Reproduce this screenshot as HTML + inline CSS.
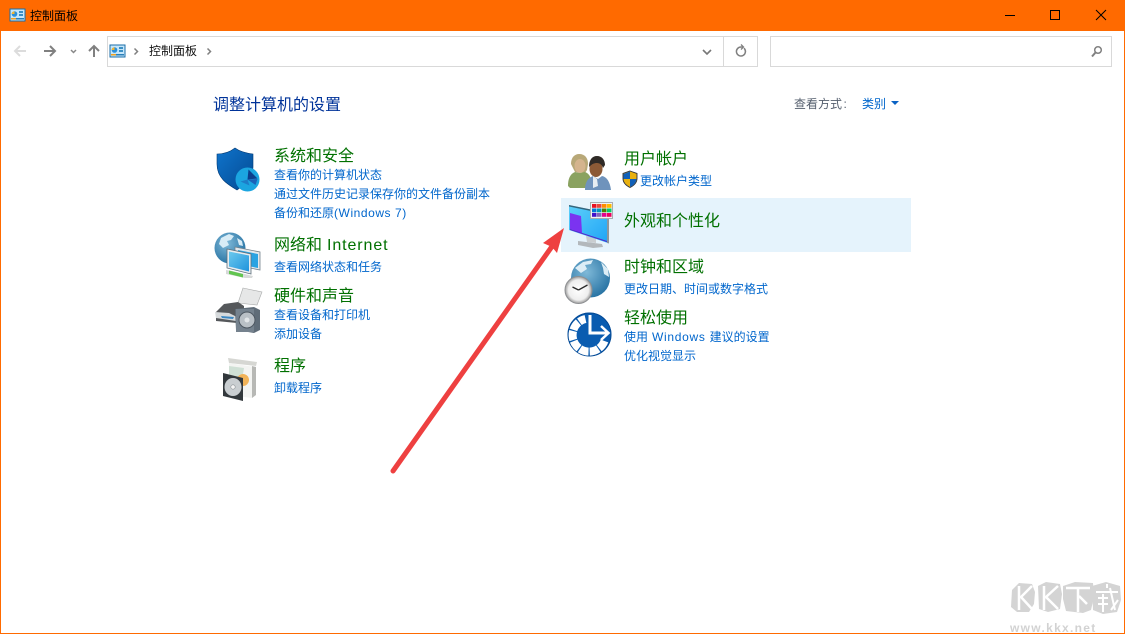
<!DOCTYPE html>
<html lang="zh-CN">
<head>
<meta charset="utf-8">
<title>控制面板</title>
<style>
html,body{margin:0;padding:0;background:#fff;}
body{width:1125px;height:634px;position:relative;overflow:hidden;font-family:"Liberation Sans","Noto Sans CJK SC",sans-serif;}
.t{position:absolute;white-space:nowrap;line-height:18px;font-size:12px;}
.h{color:#007000;font-size:16px;line-height:22px;}
.l{color:#0066cc;}
.abs{position:absolute;left:0;top:0;}
.box{position:absolute;border:1px solid #d9d9d9;box-sizing:border-box;background:#fff;}
</style>
</head>
<body>
<!-- window frame -->
<div style="position:absolute;left:0;top:0;width:1125px;height:31px;background:#ff6a00"></div>
<div style="position:absolute;left:0;top:0;width:1px;height:634px;background:#ff6a00"></div>
<div style="position:absolute;right:0;top:0;width:1px;height:634px;background:#ff6a00"></div>
<div style="position:absolute;left:0;top:633px;width:1125px;height:1px;background:#ff6a00"></div>

<!-- address bar and search -->
<div class="box" style="left:107px;top:36px;width:651px;height:31px"></div>
<div style="position:absolute;left:723px;top:36px;width:1px;height:31px;background:#d9d9d9"></div>
<div class="box" style="left:770px;top:36px;width:342px;height:31px"></div>

<!-- highlight -->
<div style="position:absolute;left:561px;top:198px;width:350px;height:54px;background:#e5f3fc"></div>

<!-- text -->
<div class="t" style="left:30px;top:7px;color:#000">控制面板</div>
<div class="t" style="left:149px;top:42px;color:#111">控制面板</div>
<div class="t" style="left:213px;top:95px;font-size:16px;line-height:22px;color:#003399">调整计算机的设置</div>
<div class="t" style="left:794px;top:95px;color:#555f6e">查看方式<span style="margin-left:1.500px">:</span></div>
<div class="t l" style="left:862px;top:95px">类别</div>

<div class="t h" style="left:274px;top:146px">系统和安全</div>
<div class="t l" style="left:274px;top:166px">查看你的计算机状态</div>
<div class="t l" style="left:274px;top:185px">通过文件历史记录保存你的文件备份副本</div>
<div class="t l" style="left:274px;top:204px">备份和还原<span style="letter-spacing:.55px">(Windows 7)</span></div>

<div class="t h" style="left:274px;top:235px">网络和<span style="margin-left:5px;letter-spacing:.9px">Internet</span></div>
<div class="t l" style="left:274px;top:258px">查看网络状态和任务</div>

<div class="t h" style="left:274px;top:286px">硬件和声音</div>
<div class="t l" style="left:274px;top:306px">查看设备和打印机</div>
<div class="t l" style="left:274px;top:325px">添加设备</div>

<div class="t h" style="left:274px;top:356px">程序</div>
<div class="t l" style="left:274px;top:379px">卸载程序</div>

<div class="t h" style="left:624px;top:149px">用户帐户</div>
<div class="t l" style="left:640px;top:172px">更改帐户类型</div>

<div class="t h" style="left:624px;top:211px">外观和个性化</div>

<div class="t h" style="left:624px;top:257px">时钟和区域</div>
<div class="t l" style="left:624px;top:280px">更改日期、时间或数字格式</div>

<div class="t h" style="left:624px;top:308px">轻松使用</div>
<div class="t l" style="left:624px;top:328px">使用<span style="margin-left:4px;letter-spacing:.7px">Windows</span><span style="margin-left:4px">建议的设置</span></div>
<div class="t l" style="left:624px;top:347px">优化视觉显示</div>

<!-- watermark text -->
<div class="t" style="left:1010px;top:621px;font-size:12px;line-height:14px;font-weight:bold;letter-spacing:1.300px;color:#d2d2d2">www.kkx.net</div>

<svg class="abs" width="1125" height="634" viewBox="0 0 1125 634" xmlns="http://www.w3.org/2000/svg">
<defs>
<linearGradient id="sh" x1="0" y1="0" x2="1" y2="1"><stop offset="0" stop-color="#0f74cc"/><stop offset="1" stop-color="#044a92"/></linearGradient>
<linearGradient id="scr" x1="0" y1="0" x2="1" y2="1"><stop offset="0" stop-color="#5ed0fa"/><stop offset="1" stop-color="#1fa4f6"/></linearGradient>
<linearGradient id="scr2" x1="0" y1="0" x2="1" y2="1"><stop offset="0" stop-color="#6cc9ee"/><stop offset="1" stop-color="#1f93dc"/></linearGradient>
<radialGradient id="gl" cx=".4" cy=".35" r=".75"><stop offset="0" stop-color="#7fb9d8"/><stop offset="1" stop-color="#1f6c9e"/></radialGradient>
<radialGradient id="ck" cx=".5" cy=".5" r=".5"><stop offset="0" stop-color="#fff"/><stop offset=".75" stop-color="#eee"/><stop offset="1" stop-color="#9a9a9a"/></radialGradient>
</defs>

<!-- title icon -->
<g>
<rect x="10" y="9" width="15" height="12" fill="#c5e6fa" stroke="#1a6ea8"/>
<circle cx="14.500" cy="14" r="2.800" fill="#2a8fd8"/><path d="M14.500 14h-2.800a2.800 2.800 0 0 1 2.800-2.800z" fill="#f5b52e"/>
<rect x="19" y="11" width="4" height="2" fill="#3b8fc4"/><rect x="19" y="14" width="4" height="2" fill="#3b8fc4"/>
<rect x="11" y="18" width="5" height="1.500" fill="#f0a020"/><rect x="16" y="18" width="8" height="1.500" fill="#2a7fb8"/>
</g>
<!-- breadcrumb icon -->
<g transform="translate(100,36)">
<rect x="10" y="9" width="15" height="12" fill="#c5e6fa" stroke="#1a6ea8"/>
<circle cx="14.500" cy="14" r="2.800" fill="#2a8fd8"/><path d="M14.500 14h-2.800a2.800 2.800 0 0 1 2.800-2.800z" fill="#f5b52e"/>
<rect x="19" y="11" width="4" height="2" fill="#3b8fc4"/><rect x="19" y="14" width="4" height="2" fill="#3b8fc4"/>
<rect x="11" y="18" width="5" height="1.500" fill="#f0a020"/><rect x="16" y="18" width="8" height="1.500" fill="#2a7fb8"/>
</g>

<!-- window buttons -->
<path d="M1005 15.500h10" stroke="#000" fill="none"/>
<rect x="1050.500" y="10.500" width="9" height="9" fill="none" stroke="#000"/>
<path d="M1096 10l10 10M1106 10l-10 10" stroke="#000" fill="none"/>

<!-- nav arrows -->
<path d="M15 51h11M20 46l-5 5 5 5" fill="none" stroke="#dcdcdc" stroke-width="2"/>
<path d="M44 51h11M50 46l5 5-5 5" fill="none" stroke="#808080" stroke-width="2"/>
<path d="M71 50l2.500 2.500 2.500-2.500" fill="none" stroke="#888" stroke-width="1.500"/>
<path d="M94 57V46M89 51l5-5 5 5" fill="none" stroke="#808080" stroke-width="2"/>
<path d="M134.500 48.500l3 3-3 3" fill="none" stroke="#808080" stroke-width="1.500"/>
<path d="M207.500 48.500l3 3-3 3" fill="none" stroke="#808080" stroke-width="1.500"/>
<path d="M703 50l4 4 4-4" fill="none" stroke="#777" stroke-width="1.600"/>
<path d="M744 48.200a4.500 4.500 0 1 1-3-1.200h2" fill="none" stroke="#808080" stroke-width="1.500"/>
<path d="M741 44.500l2.500 2.500-2.500 2.500" fill="none" stroke="#808080" stroke-width="1.300"/>
<circle cx="1098" cy="50" r="3.300" fill="none" stroke="#808080" stroke-width="1.500"/>
<path d="M1095.500 52.500l-3.500 4" stroke="#808080" stroke-width="2"/>

<!-- dropdown triangle -->
<path d="M891 101h8l-4 4z" fill="#0a62c4"/>

<!-- shield icon -->
<path d="M217 154c7 0 13-2 18-6 4 3 10 5 18 6v13c0 10-7 17-16 23-10-6-20-12-20-26z" fill="url(#sh)" stroke="#033a75" stroke-width=".6"/>
<circle cx="247.500" cy="179.500" r="12" fill="#1ba5e0"/>
<path d="M247.500 179.500l1-10 9 9z" fill="#0b3f8c"/>
<path d="M247.500 179.500l10-.5-2 6z" fill="#1b62b8"/>
<path d="M247.500 179.500l-7 2 9 4z" fill="#1d7dc8"/>

<!-- globe network icon -->
<circle cx="230" cy="248" r="15.500" fill="url(#gl)"/>
<path d="M221 238l8-4 5 2-3 4-4 1 2 4-6 3-4-4zM237 238l5 3 1 5-4-1z" fill="#d8ecf6"/>
<path d="M235 247l25 5v18l-25-5z" fill="#e4e8eb" stroke="#74828c" stroke-width=".8"/>
<path d="M238 250l20 4v14l-20-4z" fill="#2aa3e2"/>
<path d="M227 249l24 5v20l-24-6z" fill="#e8ecef" stroke="#5e6f7c" stroke-width=".8"/>
<path d="M229 251.500l20 4v16l-20-5z" fill="url(#scr2)"/>
<path d="M226 270l6 1 21 5-1 2-7 0-19-4z" fill="#d7d9d9"/>
<path d="M229 270.500l14 3.500v3.500l-14-3.500z" fill="#62c550"/>

<!-- printer speaker icon -->
<path d="M243 288l19 4-5 13-19-2z" fill="#e6e7e7" stroke="#a8aaaa" stroke-width=".6"/>
<path d="M216 312l8-8 14-2 6 4v6l-6 2-1 9-21-2z" fill="#55585b"/>
<path d="M215 312l14 1 8 4-1 4-20-3z" fill="#d6dadc"/>
<path d="M221 316l13 1-1 2-11-1z" fill="#3c88c2"/>
<path d="M235 309l19-2 6 3v20l-6 3-18-3z" fill="#5f6c78"/>
<rect x="236" y="309" width="18" height="23" fill="#75828e"/>
<circle cx="247" cy="320" r="8" fill="#b9c0c6" stroke="#4c5660"/>
<circle cx="247" cy="320" r="2.500" fill="#e2e6e9"/>

<!-- programs icon -->
<path d="M228 358l29 4-1 4-27-3z" fill="#d6d7d3"/>
<path d="M229 363l26 4v28l-3 3-23-3z" fill="#f3f4f2"/>
<path d="M252 366l4 1v28l-4 3z" fill="#b7b8b5"/>
<path d="M229 366l15 2-2 12-13-1z" fill="#cfe0d5"/>
<circle cx="243" cy="380" r="6" fill="#f1b358"/>
<path d="M223 373l20 5v23l-20-5z" fill="#32383c"/>
<ellipse cx="233" cy="387" rx="8.500" ry="9" fill="#c9ced1"/>
<circle cx="233" cy="387" r="2.200" fill="#f4f4f4" stroke="#8c9296" stroke-width=".6"/>

<!-- users icon -->
<path d="M571 164c0-7 4-10 8-10 6 0 9 4 9 10l-1 6-2 3-10-1z" fill="#b8a878"/>
<ellipse cx="580" cy="166" rx="5.500" ry="7" fill="#d4b48e"/>
<path d="M568 186c0-7 2-12 7-14l5 1 5-1c3 1 6 4 6 9v5l-3 2h-18z" fill="#8aa260"/>
<ellipse cx="596" cy="169" rx="6.500" ry="8" fill="#8c5a36"/>
<path d="M589 167c0-7 3-11 8-11 5 0 8 4 8 9l-2 3c-1-3-3-5-6-5-3 0-5 1-8 4z" fill="#2f2a26"/>
<path d="M585 190c0-8 3-12 8-14l5 3 4-3c5 1 8 6 9 14z" fill="#6f93bc"/>
<path d="M593 176l4 3 1 7-5 2z" fill="#e8eef2"/>

<!-- small UAC shield -->
<path d="M630 171l7 2.500v5c0 4-3 7-7 9-4-2-7-5-7-9v-5z" fill="#e9b10f" stroke="#30333c" stroke-width=".9"/>
<path d="M630 171.500v7.500h-6.500v-5zM630 179h6.500c-.5 4-3 6.500-6.500 8z" fill="#1160b8"/>

<!-- monitor icon -->
<path d="M578 241l24 3 1 3-10 1-15-3z" fill="#b3b8bc"/>
<path d="M586 236l10 2v5l-9-1z" fill="#c9cdd0"/>
<path d="M569 205l39 8v30l-39-13z" fill="url(#scr)"/>
<path d="M569 205l39 8v1.500l-39-8z" fill="#2a3a46" opacity=".7"/>
<path d="M570 213l11 3 1 17-12-4z" fill="#7b33f0"/>
<path d="M570 229l37 12v1l-37-12z" fill="#5a1fc8"/>
<path d="M607 213l2 .5v30l-2-.5z" fill="#8e969c"/>
<rect x="590.500" y="202.500" width="22" height="16" fill="#f2f2f2" stroke="#a7acb0"/>
<rect x="592" y="204" width="4.500" height="3.800" fill="#e81123"/><rect x="597" y="204" width="4.500" height="3.800" fill="#e8483c"/><rect x="602" y="204" width="4.500" height="3.800" fill="#ff8c00"/><rect x="607" y="204" width="4.500" height="3.800" fill="#ffb900"/>
<rect x="592" y="208.500" width="4.500" height="3.800" fill="#0078d7"/><rect x="597" y="208.500" width="4.500" height="3.800" fill="#0099bc"/><rect x="602" y="208.500" width="4.500" height="3.800" fill="#498205"/><rect x="607" y="208.500" width="4.500" height="3.800" fill="#00cc6a"/>
<rect x="592" y="213" width="4.500" height="3.800" fill="#4310c8"/><rect x="597" y="213" width="4.500" height="3.800" fill="#8764b8"/><rect x="602" y="213" width="4.500" height="3.800" fill="#e3008c"/><rect x="607" y="213" width="4.500" height="3.800" fill="#ea005e"/>

<!-- globe clock icon -->
<circle cx="590.500" cy="278" r="19.500" fill="url(#gl)"/>
<path d="M575 268l8-6 10-2-2 4-6 1 2 4-6 4zM601 262l7 7 1 8-5-3-1-6z" fill="#dcedf6"/>
<circle cx="578.500" cy="290" r="13.500" fill="url(#ck)" stroke="#8d8f92"/>
<path d="M578.500 290l-6-3M578.500 290l9-5" stroke="#2a2a2a" stroke-width="1.300" fill="none"/>

<!-- ease of access icon -->
<circle cx="589.500" cy="334.500" r="22" fill="#0a5cb0"/>
<circle cx="589.500" cy="334.500" r="21.500" fill="none" stroke="#064a94"/>
<path d="M604.500 341a16.500 16.500 0 1 1-19-22" fill="none" stroke="#fff" stroke-width="8" stroke-dasharray="9 1.200"/>
<path d="M588.500 315h3v18h-3z" fill="#fff"/>
<path d="M588.500 331.500h19v3h-19z" fill="#fff"/>
<path d="M601 326l7.500 7-7.500 7" fill="none" stroke="#fff" stroke-width="2.500"/>

<!-- red arrow -->
<path d="M393 471L553 245" stroke="#ee4040" stroke-width="5" stroke-linecap="round" fill="none"/>
<path d="M564 228L543 243l9 4 5 6z" fill="#ee4040"/>

<!-- KK watermark -->
<path d="M1012 590l7-7 13 1 3 8-1 12-5 8h-12l-6-5z" fill="#d4d4d4"/>
<path d="M1038 586l8-4 14 2 2 10-2 15-12 3-9-3z" fill="#d4d4d4"/>
<path d="M1063 586l12-4 18 1 1 14-3 13-8 3-17-2-3-12z" fill="#d4d4d4"/>
<path d="M1092 586l14-4 14 4 1 14-4 12-14 2-10-4z" fill="#d4d4d4"/>
<path d="M1019 586v24M1032 586l-11 11 11 12" fill="none" stroke="#fff" stroke-width="2.500"/>
<path d="M1044 586v24M1058 586l-12 11 12 12" fill="none" stroke="#fff" stroke-width="2.500"/>
<path d="M1066 588h24M1078 588v24M1079 596l8 8" fill="none" stroke="#fff" stroke-width="2.500"/>
<path d="M1096 592h22M1107 584v4M1098 598h10M1098 604h10M1103 594v18M1110 588l5 22M1118 600l-7 10" fill="none" stroke="#fff" stroke-width="2"/>
</svg>
</body>
</html>
